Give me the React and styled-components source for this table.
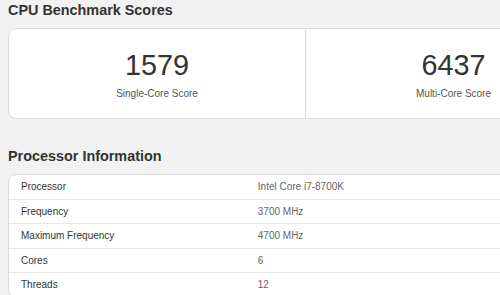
import React from "react";
import styled, { createGlobalStyle } from "styled-components";

const GlobalStyle = createGlobalStyle`
  html, body {
    margin: 0;
    padding: 0;
    overflow: hidden;
    background: #f2f2f2;
    font-family: "Liberation Sans", Arial, sans-serif;
    color: #333;
  }
`;

const scores = [
  { value: 1579, label: "Single-Core Score" },
  { value: 6437, label: "Multi-Core Score" },
];

const info = [
  ["Processor", "Intel Core i7-8700K"],
  ["Frequency", "3700 MHz"],
  ["Maximum Frequency", "4700 MHz"],
  ["Cores", "6"],
  ["Threads", "12"],
];

function App() {
  return (
    <Page>
      <GlobalStyle />
      <Section>
        <Heading>CPU Benchmark Scores</Heading>
        <ScoreCard>
          {scores.map((s) => (
            <ScoreCell key={s.label}>
              <ScoreValue>{s.value}</ScoreValue>
              <ScoreLabel>{s.label}</ScoreLabel>
            </ScoreCell>
          ))}
        </ScoreCard>
      </Section>
      <Section>
        <Heading>Processor Information</Heading>
        <InfoTable>
          <tbody>
            {info.map(([name, value]) => (
              <tr key={name}>
                <NameCell>{name}</NameCell>
                <ValueCell>{value}</ValueCell>
              </tr>
            ))}
          </tbody>
        </InfoTable>
      </Section>
    </Page>
  );
}

export default App;

const Page = styled.div`
  width: 594px;
  padding: 2px 8px 0;
  display: flex;
  flex-direction: column;
  gap: 29px;
`;

const Section = styled.section`
  display: flex;
  flex-direction: column;
  gap: 10px;
`;

const Heading = styled.h2`
  margin: 0;
  font-size: 14.4px;
  font-weight: bold;
  color: #333;
`;

const ScoreCard = styled.div`
  display: grid;
  grid-template-columns: 1fr 1fr;
  background: #fff;
  border: 1px solid #dcdcdc;
  border-radius: 8px;
`;

const ScoreCell = styled.div`
  display: flex;
  flex-direction: column;
  align-items: center;
  gap: 6px;
  padding: 20px 12px 19px;
  & + & {
    border-left: 1px solid #dcdcdc;
  }
`;

const ScoreValue = styled.div`
  font-size: 28.8px;
  color: #333;
`;

const ScoreLabel = styled.div`
  font-size: 10px;
  color: #555;
`;

const InfoTable = styled.table`
  width: 100%;
  border-collapse: separate;
  border-spacing: 0;
  background: #fff;
  border: 1px solid #dcdcdc;
  border-radius: 8px;
  font-size: 10px;
  line-height: 11.5px;
  tr + tr td {
    border-top: 1px solid #e6e6e6;
  }
`;

const NameCell = styled.td`
  width: 40%;
  padding: 6px 12px;
  color: #333;
`;

const ValueCell = styled.td`
  padding: 6px 12px;
  color: #666;
`;
